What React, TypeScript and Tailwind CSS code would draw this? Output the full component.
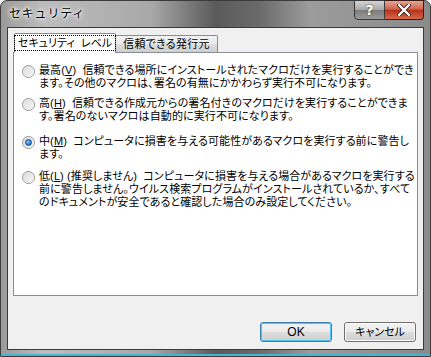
import React from "react";

const font = { fontFamily: '"Liberation Sans", "Noto Sans CJK JP", sans-serif' };

function Radio({ checked }: { checked?: boolean }) {
  return (
    <div className="w-[13px] h-[13px] rounded-full border border-[#8e8f8f] bg-gradient-to-br from-[#d8d8d8] to-[#fbfbfb] flex items-center justify-center shrink-0">
      <div className="w-[11px] h-[11px] rounded-full bg-gradient-to-br from-[#dcdcdc] to-[#f6f6f6] flex items-center justify-center">
        {checked && (
          <div className="w-[7px] h-[7px] rounded-full bg-[radial-gradient(circle_at_40%_40%,#8fd4f8_0%,#2f7fd0_55%,#1b4f9c_100%)] border border-[#1a4c8e]" />
        )}
      </div>
    </div>
  );
}

function Item({
  checked,
  label,
  u,
  rest,
  lines,
  mt,
}: {
  checked?: boolean;
  label: string;
  u: string;
  rest: string;
  lines: string[];
  mt: string;
}) {
  return (
    <div className={"flex items-start " + mt}>
      <div className="w-[25px] shrink-0 flex pl-[8px] pt-[1px]">
        <Radio checked={checked} />
      </div>
      <div className="text-[11px] leading-[13px] text-black whitespace-pre tracking-[0.1px] [font-feature-settings:'palt']">
        <div>
          {label}(<span className="underline">{u}</span>){rest}
        </div>
        {lines.map((l, i) => (
          <div key={i}>{l}</div>
        ))}
      </div>
    </div>
  );
}

export default function App() {
  return (
    <div className="w-[431px] h-[357px] bg-white overflow-hidden" style={font}>
      <div className="w-[431px] h-[357px] rounded-t-[7px] border border-[#3c3c3c] bg-[linear-gradient(90deg,#9a9a9a_0%,#bdbdbd_10%,#a8a8a8_35%,#5a5a5a_50%,#6a6a6a_60%,#9c9c9c_72%,#8a8a8a_100%)] flex flex-col">
        {/* title bar */}
        <div className="h-[26px] flex items-start relative">
          <div className="pl-[8px] pt-[5px] text-[12px] leading-[16px] text-black [text-shadow:0_0_6px_#fff,0_0_4px_#fff,0_0_2px_#fff] tracking-[0.8px]">
            セキュリティ
          </div>
          <div className="ml-auto mr-[6px] flex h-[20px] -mt-[1px]">
            <div className="w-[31px] h-[20px] rounded-bl-[4px] border border-[#3a3a3a] bg-[linear-gradient(180deg,#d4d4d4_0%,#a9a9a9_48%,#7c7c7c_52%,#9a9a9a_100%)] flex items-center justify-center text-white font-bold text-[14px] [text-shadow:0_0_2px_#222]" style={{ fontFamily: '"DejaVu Sans", sans-serif' }}>
              ?
            </div>
            <div className="w-[39px] h-[20px] rounded-br-[4px] border border-l-0 border-[#3a1a14] bg-[linear-gradient(180deg,#e8a493_0%,#d0634c_45%,#b8321b_52%,#d56a4e_100%)] flex items-center justify-center">
              <svg width="14" height="12" viewBox="0 0 14 12">
                <path d="M2 1 L12 11 M12 1 L2 11" stroke="#3a1a14" strokeWidth="4" strokeLinecap="round" />
                <path d="M2 1 L12 11 M12 1 L2 11" stroke="#ffffff" strokeWidth="2.4" strokeLinecap="round" />
              </svg>
            </div>
          </div>
        </div>
        {/* client */}
        <div className="mx-[6px] flex-1 border border-[#3a3a3a] bg-[#f0f0f0] flex flex-col">
          <div className="pl-[6px] pt-[5px] flex items-end">
            <div className="h-[20px] w-[102px] border border-b-0 border-[#898c95] bg-white rounded-t-[2px] flex items-center justify-center relative z-10 -mb-[1px] pb-[1px]">
              <div className="border border-dotted border-black px-[3px] text-[11px] leading-[14px] whitespace-pre [font-feature-settings:'palt']">
                {"セキュリティ\u00a0\u00a0レベル"}
              </div>
            </div>
            <div className="h-[17px] w-[102px] border border-l-0 border-b-0 border-[#898c95] bg-[linear-gradient(180deg,#f2f2f2_0%,#ebebeb_50%,#dddddd_51%,#cfcfcf_100%)] rounded-tr-[2px] flex items-center justify-center text-[11px] leading-[14px] whitespace-nowrap tracking-[0.3px] [font-feature-settings:'palt']">
              信頼できる発行元
            </div>
          </div>
          <div className="mx-[5px] h-[244px] border border-[#898c95] bg-white pt-[11px] flex flex-col">
            <Item
              mt="mt-0"
              label="最高"
              u="V"
              rest="  信頼できる場所にインストールされたマクロだけを実行することができ"
              lines={["ます。その他のマクロは、署名の有無にかかわらず実行不可になります。"]}
            />
            <Item
              mt="mt-[7px]"
              label="高"
              u="H"
              rest="  信頼できる作成元からの署名付きのマクロだけを実行することができま"
              lines={["す。署名のないマクロは自動的に実行不可になります。"]}
            />
            <Item
              mt="mt-[12px]"
              checked
              label="中"
              u="M"
              rest="  コンピュータに損害を与える可能性があるマクロを実行する前に警告し"
              lines={["ます。"]}
            />
            <Item
              mt="mt-[9px]"
              label="低"
              u="L"
              rest=" (推奨しません)  コンピュータに損害を与える場合があるマクロを実行する"
              lines={[
                "前に警告しません。ウイルス検索プログラムがインストールされているか、すべて",
                "のドキュメントが安全であると確認した場合のみ設定してください。",
              ]}
            />
          </div>
          <div className="flex justify-end gap-[12px] pr-[7px] pt-[26px]">
            <div className="w-[72px] h-[20px] rounded-[3px] border border-[#3c7fb1] bg-[linear-gradient(180deg,#f2f2f2_0%,#ebebeb_50%,#dddddd_51%,#cfcfcf_100%)] shadow-[inset_0_0_0_1px_#48c6f4] flex items-center justify-center text-[12px] leading-[14px]">
              OK
            </div>
            <div className="w-[72px] h-[20px] rounded-[3px] border border-[#707070] bg-[linear-gradient(180deg,#f2f2f2_0%,#ebebeb_50%,#dddddd_51%,#cfcfcf_100%)] shadow-[inset_0_0_0_1px_#fcfcfc] flex items-center justify-center text-[11px] leading-[14px] [font-feature-settings:'palt']">
              キャンセル
            </div>
          </div>
        </div>
        <div className="h-[6px] border-b-2 border-[#46b4d8]" />
      </div>
    </div>
  );
}
